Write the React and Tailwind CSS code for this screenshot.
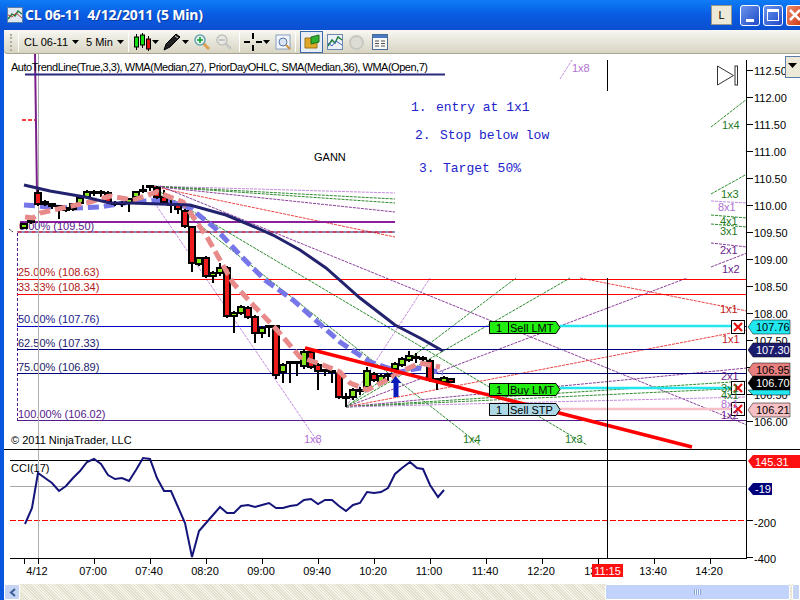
import React from 'react';

const GANN_GREEN = '#2e8b2e';
const GANN_PURPLE = '#8b3f9b';
const GANN_LIGHT = '#c58ae0';
const GANN_RED = '#f04040';

// x, body top, body bottom, colour (g / r / d), wick top, wick bottom
const candles = [
  [24, 224, 228, 'g', 223, 229], [31, 221, 222, 'd', 220, 224], [38, 193, 204, 'r', 190, 206], [45, 202, 204, 'd', 200, 206],
  [52, 204, 206, 'r', 203, 209], [59, 206, 207, 'd', 205, 219], [66, 208, 210, 'r', 207, 212], [73, 204, 209, 'g', 203, 211],
  [80, 198, 203, 'g', 197, 205], [87, 192, 197, 'g', 190, 199], [94, 192, 193, 'd', 190, 196], [101, 192, 193, 'd', 190, 197],
  [108, 193, 202, 'r', 191, 204], [115, 203, 204, 'd', 201, 206], [122, 203, 204, 'd', 201, 207], [129, 199, 203, 'g', 198, 212],
  [136, 192, 197, 'g', 191, 199], [143, 190, 191, 'd', 185, 193], [150, 186, 187, 'd', 185, 191], [157, 188, 197, 'r', 186, 199],
  [164, 197, 202, 'r', 190, 205], [171, 204, 205, 'd', 200, 213], [178, 205, 209, 'r', 203, 214], [185, 211, 226, 'r', 209, 228],
  [192, 227, 263, 'r', 226, 272], [199, 258, 264, 'g', 257, 266], [206, 258, 276, 'r', 256, 278], [213, 273, 276, 'g', 271, 283],
  [220, 268, 273, 'g', 263, 276], [227, 268, 316, 'r', 266, 318], [234, 313, 316, 'g', 311, 333], [241, 307, 313, 'g', 305, 315],
  [248, 308, 317, 'r', 306, 319], [255, 317, 333, 'r', 315, 343], [262, 328, 333, 'g', 326, 338], [269, 326, 327, 'd', 325, 337],
  [276, 326, 375, 'r', 325, 379], [283, 365, 372, 'g', 363, 383], [290, 362, 363, 'd', 361, 383], [297, 362, 363, 'd', 361, 376],
  [304, 352, 366, 'g', 349, 369], [311, 352, 367, 'r', 350, 369], [318, 365, 371, 'r', 363, 390], [325, 370, 371, 'd', 369, 376],
  [332, 371, 372, 'd', 370, 383], [339, 373, 397, 'r', 372, 399], [346, 397, 398, 'd', 393, 407], [353, 390, 397, 'g', 388, 400],
  [360, 390, 391, 'd', 387, 395], [367, 371, 387, 'g', 367, 390], [374, 374, 380, 'r', 372, 382], [381, 376, 382, 'g', 374, 384],
  [388, 375, 376, 'd', 373, 381], [395, 364, 369, 'g', 362, 375], [402, 359, 365, 'g', 357, 367], [409, 356, 360, 'g', 351, 362],
  [416, 357, 358, 'd', 353, 363], [423, 358, 359, 'd', 356, 362], [430, 361, 380, 'r', 359, 382], [437, 379, 380, 'd', 378, 390],
  [444, 378, 382, 'g', 376, 384], [451, 379, 382, 'r', 378, 383],
];

const gannLines = [
  // first fan
  [150, 186, 395, 193, GANN_LIGHT], [150, 186, 395, 199, GANN_GREEN], [150, 186, 395, 203, GANN_GREEN],
  [150, 186, 395, 212, GANN_PURPLE], [150, 186, 395, 237, GANN_RED], [580, 278, 747, 311, GANN_RED],
  [160, 186, 747, 425, GANN_PURPLE], [150, 186, 587, 445, GANN_GREEN], [150, 186, 480, 445, GANN_GREEN],
  [143, 186, 320, 445, GANN_LIGHT],
  // second fan
  [346, 407, 430, 278, GANN_LIGHT], [346, 407, 516, 278, GANN_GREEN], [346, 407, 570, 278, GANN_GREEN],
  [346, 407, 687, 278, GANN_PURPLE], [346, 407, 747, 330, GANN_RED], [346, 407, 747, 368, GANN_PURPLE],
  [346, 407, 747, 381, GANN_GREEN], [346, 407, 747, 388, GANN_GREEN], [346, 407, 747, 397, GANN_LIGHT],
  // stubs on the right side
  [711, 127, 747, 99, GANN_GREEN], [711, 194, 747, 174, GANN_GREEN], [711, 201, 747, 203, GANN_LIGHT],
  [711, 215, 747, 218, GANN_GREEN], [711, 224, 747, 227, GANN_GREEN], [711, 243, 747, 247, GANN_PURPLE],
  [711, 267, 747, 253, GANN_PURPLE], [560, 79, 572, 60, GANN_LIGHT],
];

const gannLabels = [
  ['1x8', 572, 72, '#b070d0'], ['1x4', 722, 129, '#1e7a1e'], ['1x3', 721, 198, '#1e7a1e'], ['8x1', 718, 211, '#b070d0'],
  ['4x1', 720, 225, '#1e7a1e'], ['3x1', 720, 235, '#1e7a1e'], ['2x1', 720, 254, '#6a1a8a'], ['1x2', 722, 273, '#6a1a8a'],
  ['1x1', 720, 313, '#c02020'], ['1x1', 722, 343, '#c02020'], ['2x1', 721, 380, '#6a1a8a'], ['3x1', 721, 392, '#1e7a1e'],
  ['4x1', 721, 399, '#1e7a1e'], ['8x1', 721, 408, '#b070d0'], ['1x2', 721, 419, '#6a1a8a'], ['1x8', 304, 443, '#b070d0'],
  ['1x4', 463, 443, '#1e7a1e'], ['1x3', 565, 443, '#1e7a1e'],
];

const fibLevels = [
  ['25.00% (108.63)', 279, 273, '#ff0000', '#b01818'],
  ['33.33% (108.34)', 294, 288, '#ff0000', '#b01818'],
  ['50.00% (107.76)', 326, 320, '#0000cc', '#1a1a8a'],
  ['62.50% (107.33)', 349, 344, '#000080', '#1a1a6a'],
  ['75.00% (106.89)', 373, 368, '#000080', '#1a1a6a'],
  ['100.00% (106.02)', 420, 415, '#551a8b', '#551a8b'],
];

const axisPrices = ['112.50', '112.00', '111.50', '111.00', '110.50', '110.00', '109.50', '109.00', '108.50', '108.00', '107.50', '107.00', '106.50', '106.00'];

const priceTags = [
  ['107.76', 320, '#22e6f0', '#000'],
  ['107.30', 343, '#1c1c6e', '#fff'],
  ['106.95', 363, '#e88080', '#000'],
  ['106.70', 376, '#000', '#fff'],
  ['106.21', 403, '#f6c0c4', '#000'],
];

const orders = [
  ['Sell LMT', 321, '#22ee11', 326, '#22e6f0'],
  ['Buy LMT', 383, '#22ee11', 388, '#22e6f0'],
  ['Sell STP', 403, '#add8e6', 409, '#f8c0c8'],
];

const cci = '25,524 32,508 38,473 45,478 52,483 59,491 66,486 73,478 80,471 87,462 94,459 101,464 108,475 115,479 122,478 129,481 136,470 143,458 150,459 157,478 164,491 171,491 178,507 185,523 192,557 199,531 206,523 213,515 220,507 227,513 234,513 241,506 248,505 255,507 262,505 269,503 276,508 283,508 290,506 297,505 304,500 311,499 318,504 325,500 332,500 339,506 346,511 353,505 360,503 367,492 374,493 381,492 388,488 395,474 402,468 410,462 417,468 423,469 430,485 438,497 444,490';

const timeLabels = [['4/12', 37], ['07:00', 93], ['07:40', 149], ['08:20', 205], ['09:00', 261], ['09:40', 317], ['10:20', 373], ['11:00', 429], ['11:40', 485], ['12:20', 541], ['13:00', 598], ['13:40', 653], ['14:20', 709]];
const timeTicks = [24, 38, 94, 150, 206, 262, 318, 374, 430, 486, 542, 598, 654, 710];

const Caret = () => (
  <svg width="7" height="4" viewBox="0 0 7 4" className="shrink-0"><path d="M0 0h7L3.5 4z" fill="#000" /></svg>
);

const Sep = () => <div className="mx-[4px] h-[20px] w-[1px] bg-[#a8a594] border-r border-white" />;

const CandleIcon = () => (
  <svg width="18" height="18" viewBox="0 0 18 18">
    <path d="M3.5 1v16M9.5 0v15M15.5 3v15" stroke="#000" />
    <rect x="1.5" y="4" width="4" height="10" fill="#10e010" stroke="#000" />
    <rect x="7.5" y="2" width="4" height="10" fill="#10e010" stroke="#000" />
    <rect x="13.5" y="6" width="4" height="10" fill="#e01010" stroke="#000" />
  </svg>
);

const PenIcon = () => (
  <svg width="18" height="18" viewBox="0 0 18 18">
    <path d="M1 17l2-6L13 1l4 3L7 14z" fill="#222" stroke="#000" />
    <path d="M12 3l3 2" stroke="#ddd" />
  </svg>
);

const ZoomIcon = ({ active }) => (
  <svg width="16" height="16" viewBox="0 0 16 16">
    <path d="M9 9l6 6" stroke={active ? '#e0a050' : '#c8c8c4'} strokeWidth="3" />
    <circle cx="6" cy="6" r="5" fill={active ? '#e6f6f0' : '#e8e8e4'} stroke={active ? '#6aa0b0' : '#c0c0bc'} strokeWidth="1.5" />
    {active ? <path d="M3 6h6M6 3v6" stroke="#10a030" strokeWidth="1.6" /> : <path d="M3 6h6" stroke="#b8b8b4" strokeWidth="1.6" />}
  </svg>
);

const CrossIcon = () => (
  <svg width="18" height="18" viewBox="0 0 18 18">
    <path d="M0 9h6M12 9h6M9 0v6M9 12v6" stroke="#000" strokeWidth="2" />
  </svg>
);

const ToolbarIcons = () => (
  <>
    <svg width="16" height="16" viewBox="0 0 16 16">
      <rect x="1" y="1" width="14" height="14" fill="#f2f6fc" stroke="#8aa0c0" />
      <circle cx="8" cy="8" r="4" fill="#d8e4f4" stroke="#5878a8" />
      <path d="M11 11l4 4" stroke="#d09040" strokeWidth="2" />
    </svg>
  </>
);

const TitleBar = () => (
  <div className="flex h-[30px] items-center bg-gradient-to-b from-[#0f7cf5] via-[#0a5be2] to-[#0b4fd0] pl-[7px] text-white">
    <svg width="16" height="16" viewBox="0 0 16 16" className="shrink-0">
      <rect x="0.5" y="0.5" width="15" height="15" fill="#dfe8f0" stroke="#5a7ea8" />
      <path d="M1 12l4-5 3 2 3-5 4 3" stroke="#208040" strokeWidth="1.5" fill="none" />
      <path d="M1 8l4 2 4-4 6 5" stroke="#c04040" fill="none" />
    </svg>
    <span className="ml-[2px] whitespace-pre font-['Noto_Sans',sans-serif] text-[14px] font-bold leading-none tracking-[-0.2px] [text-shadow:1px_1px_#0a3aa0]">CL 06-11  4/12/2011 (5 Min)</span>
    <div className="ml-auto flex items-center">
      <div className="flex h-[20px] w-[21px] items-center justify-center border border-[#9a9a8a] bg-[#ece9d8] font-['Liberation_Sans',sans-serif] text-[11px] text-black">L</div>
      <div className="ml-[8px] flex h-[21px] w-[20px] items-end justify-center rounded-[3px] border border-white bg-gradient-to-br from-[#6d94ec] to-[#1f48c8] pb-[3px]">
        <div className="h-[3px] w-[8px] bg-white" />
      </div>
      <div className="ml-[3px] flex h-[21px] w-[20px] items-center justify-center rounded-[3px] border border-white bg-gradient-to-br from-[#6d94ec] to-[#1f48c8]">
        <div className="h-[12px] w-[12px] border border-t-[3px] border-white" />
      </div>
      <div className="ml-[3px] flex h-[21px] w-[14px] items-center justify-start overflow-hidden rounded-l-[3px] border border-r-0 border-white bg-gradient-to-br from-[#ec8a6a] to-[#d03a10] pl-[2px]">
        <svg width="12" height="12" viewBox="0 0 12 12" className="shrink-0"><path d="M1 1l10 10M11 1L1 11" stroke="#fff" strokeWidth="2.5" /></svg>
      </div>
    </div>
  </div>
);

const Toolbar = () => (
  <div className="flex h-[24px] items-center rounded-l-[4px] bg-gradient-to-b from-[#f8f7f2] to-[#d6d3c0] pl-[3px] font-['Liberation_Sans',sans-serif] text-[11px] text-black shadow-[inset_0_-1px_#a8a594]">
    <div className="ml-[3px] mr-[2px] h-[17px] w-[2px] border-l-2 border-dotted border-[#b0ad9c]" />
    <Sep />
    <span className="ml-[1px] w-[43px] whitespace-nowrap">CL 06-11</span>
    <span className="ml-[5px]"><Caret /></span>
    <span className="ml-[7px] w-[26px] whitespace-nowrap">5 Min</span>
    <span className="ml-[5px]"><Caret /></span>
    <Sep />
    <CandleIcon />
    <span className="ml-[1px]"><Caret /></span>
    <span className="ml-[4px]"><PenIcon /></span>
    <span className="ml-[1px]"><Caret /></span>
    <span className="ml-[5px]"><ZoomIcon active /></span>
    <span className="ml-[6px]"><ZoomIcon /></span>
    <span className="ml-[3px]"><Sep /></span>
    <CrossIcon />
    <span className="ml-[1px]"><Caret /></span>
    <span className="ml-[5px]"><ToolbarIcons /></span>
    <Sep />
    <div className="flex h-[22px] w-[23px] items-center justify-center border border-[#3c6ab0] bg-[#e8eef4]">
      <svg width="16" height="16" viewBox="0 0 16 16">
        <path d="M1 4h6l1 2h5v8H1z" fill="#e0a828" stroke="#9a7418" />
        <path d="M7 3l8-2v7l-8 2z" fill="#30b030" stroke="#1a701a" />
      </svg>
    </div>
    <svg width="16" height="16" viewBox="0 0 16 16" className="ml-[4px]">
      <rect x="0.5" y="0.5" width="15" height="15" fill="#eef2f8" stroke="#6a88b0" />
      <path d="M1 12l4-6 3 3 3-6 4 3" stroke="#208040" strokeWidth="1.5" fill="none" />
      <path d="M1 9l4 3 4-5 6 4" stroke="#4060c0" fill="none" />
    </svg>
    <div className="ml-[6px] h-[15px] w-[15px] rounded-full border-2 border-[#c8c8c0] bg-[#dcdcd4]" />
    <svg width="16" height="16" viewBox="0 0 16 16" className="ml-[8px]">
      <rect x="0.5" y="0.5" width="15" height="15" fill="#f8f8f4" stroke="#4a6a9a" />
      <path d="M1 2.5h14" stroke="#4a78c0" strokeWidth="3" />
      <path d="M3 7h4M9 7h4M3 9.5h4M9 9.5h4M3 12h4M9 12h4" stroke="#505050" />
    </svg>
  </div>
);

const Candle = ({ c }) => {
  const [x, top, bottom, kind, wickTop, wickBottom] = c;
  const fill = kind === 'g' ? '#86e81a' : kind === 'r' ? '#ee1c1c' : '#000';
  return (
    <g>
      <line x1={x} x2={x} y1={wickTop} y2={wickBottom} stroke="#000" strokeWidth="2" />
      <rect x={x - 3} y={top} width="6" height={bottom - top} fill={fill} stroke="#000" strokeWidth="2" />
    </g>
  );
};

const PricePanel = () => (
  <svg viewBox="4 54 796 396" className="block h-[396px] w-[796px] font-['Liberation_Sans',sans-serif] text-[11px]">
    {/* fan lines */}
    {gannLines.map((l, i) => (
      <line key={i} x1={l[0]} y1={l[1]} x2={l[2]} y2={l[3]} stroke={l[4]} strokeWidth="1" strokeDasharray="3 1" />
    ))}

    {/* fib levels */}
    <line x1="20" x2="395" y1="222" y2="222" stroke="#8b1f9b" strokeWidth="2" />
    <line x1="17.5" x2="395" y1="232" y2="232" stroke="#1a1a8a" strokeWidth="1" />
    <line x1="17.5" x2="395" y1="232" y2="232" stroke="#ff0000" strokeWidth="1" strokeDasharray="4 3" />
    <line x1="17.5" x2="17.5" y1="233" y2="420" stroke="#551a8b" strokeDasharray="3 2" />
    <path d="M9 229l4 3" stroke="#333" strokeDasharray="2 1" />
    {fibLevels.map(([label, y, ty, color, textColor]) => (
      <g key={label}>
        <line x1="17" x2="747" y1={y + 0.5} y2={y + 0.5} stroke={color} />
        <text x="18" y={ty + 3} fill={textColor} className="text-[11px]">{label}</text>
      </g>
    ))}
    <text x="19" y="230" fill="#551a8b">0.00% (109.50)</text>

    {/* top left study marks */}
    <line x1="38.5" x2="38.5" y1="54" y2="450" stroke="#b0b0b0" />
    <line x1="35" x2="37" y1="54" y2="195" stroke="#7a1f8a" strokeWidth="2" />
    <line x1="25" x2="445" y1="74.5" y2="74.5" stroke="#2a2a80" strokeWidth="2" />
    <line x1="22" x2="35" y1="120" y2="120" stroke="#ff0000" strokeWidth="1.5" strokeDasharray="4 2" />

    {/* studies under the bars */}
    <polyline points="24,205 50,207 75,208 100,207 130,202 165,200 190,208 215,228 240,255 265,280 293,300 340,342 370,362 400,372 420,368 443,373" fill="none" stroke="#7676e8" strokeWidth="5" strokeDasharray="11 5" />
    {candles.map((c) => <Candle key={c[0]} c={c} />)}
    <polyline points="25,217 33,218 40,213 67,207 90,202 110,196 133,200 157,192 183,202 207,237 233,283 255,307 277,330 300,357 323,365 340,372 350,383 367,390 383,382 400,372 420,363 440,367" fill="none" stroke="#e88a8a" strokeWidth="5" strokeDasharray="11 5" />
    <polyline points="24,185 50,191 85,197 110,203 130,203 190,205 226,215 250,225 273,235 300,250 326,268 360,298 395,325 420,338 443,351" fill="none" stroke="#22226e" strokeWidth="3" />
    <line x1="305" y1="348" x2="692" y2="447" stroke="#ff0000" strokeWidth="3.5" />

    {/* entry arrow */}
    <path d="M395.5 376l-5 7h3v14h5v-14h3z" fill="#0a1ab8" />

    {/* order lines and flags */}
    {orders.map(([label, y, color, lineY, lineColor]) => (
      <g key={label}>
        <line x1="560" x2="731" y1={lineY} y2={lineY} stroke={lineColor} strokeWidth="2.5" />
        <polygon points={`489.5,${y + 0.5} 556,${y + 0.5} 560,${y + 6.5} 556,${y + 12.5} 489.5,${y + 12.5}`} fill={color} stroke="#000" />
        <line x1="508.5" x2="508.5" y1={y} y2={y + 13} stroke="#000" />
        <text x="499" y={y + 10.5} textAnchor="middle">1</text>
        <text x="510" y={y + 10.5}>{label}</text>
      </g>
    ))}
    {[320, 381, 402].map((y) => (
      <g key={y}>
        <rect x="731.5" y={y + 0.5} width="13" height="13" fill="#fff" stroke="#000" />
        <path d={`M734 ${y + 3}l8 8M742 ${y + 3}l-8 8`} stroke="#e81010" strokeWidth="2.2" />
      </g>
    ))}

    {/* chart text */}
    {gannLabels.map(([label, x, y, color], i) => (
      <text key={i} x={x} y={y} fill={color}>{label}</text>
    ))}
    <text x="11" y="71" fill="#000" className="text-[11px]" textLength="417">AutoTrendLine(True,3,3), WMA(Median,27), PriorDayOHLC, SMA(Median,36), WMA(Open,7)</text>
    <text x="314" y="161" fill="#000">GANN</text>
    <g fill="#2222cc" className="font-['Liberation_Mono',monospace] text-[13px]">
      <text x="411" y="111">1.</text>
      <text x="436" y="111">entry at 1x1</text>
      <text x="415" y="139">2.</text>
      <text x="440" y="139">Stop below low</text>
      <text x="419" y="172">3.</text>
      <text x="443" y="172">Target 50%</text>
    </g>
    <text x="11" y="444" fill="#000">© 2011 NinjaTrader, LLC</text>

    {/* vertical line */}
    <line x1="607.5" x2="607.5" y1="60" y2="91" stroke="#000" />
    <line x1="607.5" x2="607.5" y1="278" y2="450" stroke="#000" />

    {/* replay mark */}
    <path d="M717.5 66v19l16-9.500z" fill="none" stroke="#333" />
    <rect x="735" y="66" width="2.500" height="19" fill="none" stroke="#333" />

    {/* price axis */}
    <line x1="746.5" x2="746.5" y1="60" y2="450" stroke="#000" />
    {axisPrices.map((p, i) => {
      const y = 70 + i * 27;
      return (
        <g key={p}>
          <line x1="747" x2="753" y1={y + 0.5} y2={y + 0.5} stroke="#000" />
          <text x="754" y={y + 5} fill="#000">{p}</text>
        </g>
      );
    })}
    {priceTags.map(([p, y, bg, fg]) => (
      <g key={p}>
        <polygon points={`748,${y + 7} 753,${y} 790,${y} 790,${y + 14} 753,${y + 14}`} fill={bg} stroke="#000" strokeWidth="0.5" />
        <text x="756" y={y + 11} fill={fg}>{p}</text>
      </g>
    ))}
    <polygon points="748,390 753,390 790,390 790,395 753,395" fill="#22e6f0" stroke="#000" strokeWidth="0.5" />

    {/* panel scroll button */}
    <rect x="785.5" y="56.5" width="15" height="21" fill="#ece9d8" stroke="#5a7ea8" />
    <path d="M788 63h9l-4.500 5z" fill="#000" />

    <line x1="4" x2="800" y1="449.5" y2="449.5" stroke="#000" />
  </svg>
);

const CciPanel = () => (
  <svg viewBox="4 450 796 134" className="block h-[134px] w-[796px] font-['Liberation_Sans',sans-serif] text-[11px]">
    <line x1="10" x2="747" y1="460.5" y2="460.5" stroke="#000" />
    <line x1="10" x2="747" y1="486.5" y2="486.5" stroke="#a8a8a8" />
    <line x1="10" x2="747" y1="520.5" y2="520.5" stroke="#ff0000" strokeDasharray="6 2" strokeWidth="1.2" />
    <line x1="38.5" x2="38.5" y1="450" y2="558" stroke="#b0b0b0" />
    <line x1="607.5" x2="607.5" y1="450" y2="558" stroke="#000" />
    <polyline points={cci} fill="none" stroke="#14147a" strokeWidth="2" />
    <text x="11" y="472" fill="#000">CCI(17)</text>

    {/* time axis */}
    <line x1="10" x2="747" y1="558.5" y2="558.5" stroke="#000" />
    {timeTicks.map((x) => <line key={x} x1={x + 0.5} x2={x + 0.5} y1="558" y2="564" stroke="#000" />)}
    {timeLabels.map(([t, x]) => <text key={t} x={x} y="575" textAnchor="middle" fill="#000">{t}</text>)}
    <rect x="592" y="564" width="31" height="13" fill="#ff1010" />
    <text x="607.500" y="575" textAnchor="middle" fill="#fff">11:15</text>

    {/* value axis */}
    <line x1="746.5" x2="746.5" y1="450" y2="558" stroke="#000" />
    <line x1="747" x2="753" y1="520.5" y2="520.5" stroke="#000" />
    <line x1="747" x2="753" y1="557.5" y2="557.5" stroke="#000" />
    <text x="754" y="527" fill="#000">-200</text>
    <text x="754" y="563" fill="#000">-400</text>
    <polygon points="748,461 753,455 800,455 800,468 753,468" fill="#ff1010" />
    <text x="755" y="466" fill="#fff">145.31</text>
    <polygon points="748,489 753,483 772,483 772,495 753,495" fill="#00007a" />
    <text x="755" y="493" fill="#fff">-19</text>
  </svg>
);

const ScrollBar = () => (
  <div className="flex h-[16px] bg-[#f0eee0] [background-image:repeating-linear-gradient(45deg,#e2dfcc_0_1px,#f6f4ea_1px_2px)]">
    <div className="flex w-[16px] items-center justify-center rounded-[2px] border border-white bg-[#c6d4f4]">
      <svg width="7" height="9" viewBox="0 0 7 9"><path d="M6 1L2 4.500 6 8" fill="none" stroke="#3a5a9a" strokeWidth="2" /></svg>
    </div>
    <div className="ml-[585px] flex w-[185px] items-center justify-center rounded-[2px] border border-white bg-[#c1d3fb]">
      <div className="h-[6px] w-[7px] [background-image:repeating-linear-gradient(90deg,#8aa4dc_0_1px,#eef2fc_1px_2px)]" />
    </div>
    <div className="ml-[2px] w-[8px] rounded-l-[2px] border border-white bg-[#c6d4f4]" />
  </div>
);

const App = () => {
  return (
    <div className="flex h-[600px] w-[800px] flex-col overflow-hidden bg-[#0a5be2]">
      <TitleBar />
      <div className="flex min-h-0 flex-1">
        <div className="w-[4px] shrink-0 bg-[#0a55e0]" />
        <div className="flex min-w-0 flex-1 flex-col bg-white">
          <Toolbar />
          <PricePanel />
          <CciPanel />
          <ScrollBar />
        </div>
      </div>
    </div>
  );
};

export default App;
